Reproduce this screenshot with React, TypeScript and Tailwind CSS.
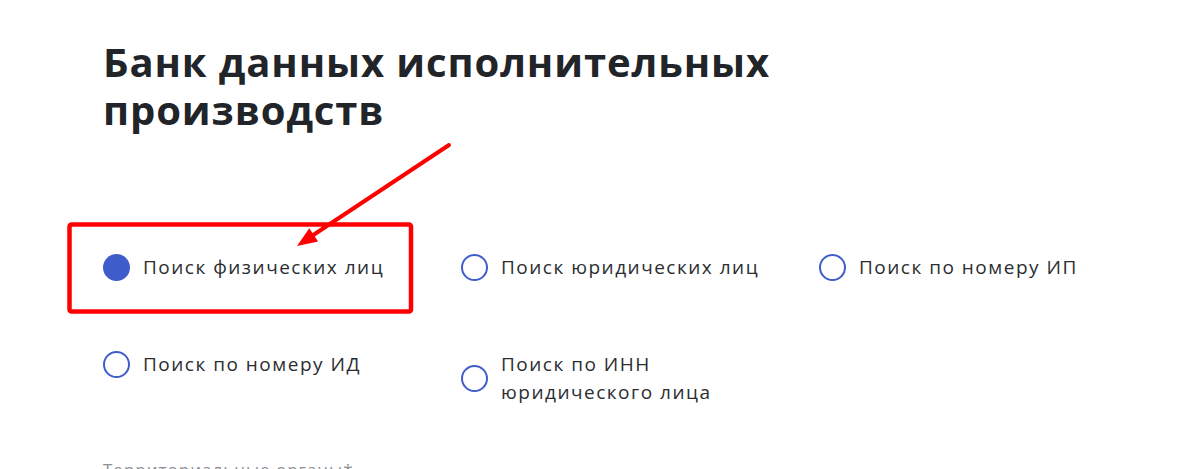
import React from "react";

function Radio({ checked, children }: { checked?: boolean; children: React.ReactNode }) {
  return (
    <div className="flex items-center gap-[13px]">
      {checked ? (
        <span className="block w-[27px] h-[27px] rounded-full bg-[#3e5dcb] shrink-0" />
      ) : (
        <span className="block w-[27px] h-[27px] rounded-full border-2 border-[#3e5dcb] shrink-0" />
      )}
      <span className="text-[19px] leading-[28px] tracking-[1.5px] text-[#2b2d31]">{children}</span>
    </div>
  );
}

export default function App() {
  return (
    <div
      className="relative w-[1192px] h-[469px] overflow-hidden bg-white pl-[103px] pt-[38px]"
      style={{ fontFamily: '"Open Sans", "Noto Sans", sans-serif' }}
    >
      <h1 className="text-[40px] leading-[48px] font-bold text-[#212428] tracking-[0.9px]">
        Банк данных исполнительных
        <br />
        производств
      </h1>
      <div className="mt-[119px] grid grid-cols-[358px_358px_358px] gap-y-[69px] items-start">
        <Radio checked>Поиск физических лиц</Radio>
        <Radio>Поиск юридических лиц</Radio>
        <Radio>Поиск по номеру ИП</Radio>
        <Radio>Поиск по номеру ИД</Radio>
        <Radio>
          Поиск по ИНН
          <br />
          юридического лица
        </Radio>
      </div>
      <div className="mt-[54px] text-[17px] leading-[20px] tracking-[1px] text-[#8c8f94]">Территориальные органы*</div>

      <svg className="absolute left-0 top-0 pointer-events-none" width="1192" height="469">
        <rect x="69.5" y="224.5" width="341.5" height="87" rx="2" fill="none" stroke="#ff0000" strokeWidth="4.5" />
        <line x1="449" y1="145" x2="308" y2="238.5" stroke="#ff0000" strokeWidth="4" strokeLinecap="round" />
        <polygon points="297,246 309.3,228.2 318.1,241.6" fill="#ff0000" />
      </svg>
    </div>
  );
}
